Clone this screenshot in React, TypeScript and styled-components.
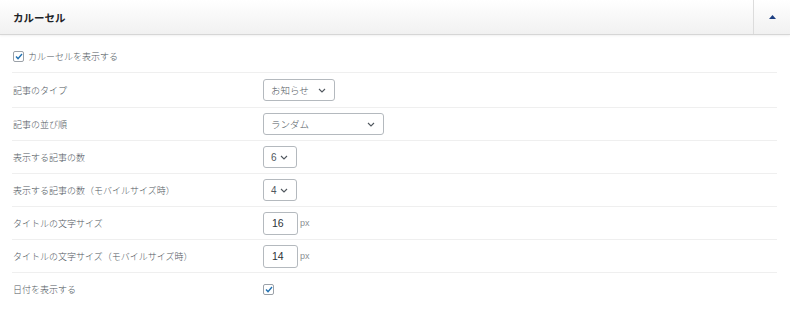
import * as React from "react";
import styled, { createGlobalStyle } from "styled-components";

const GlobalStyle = createGlobalStyle`
  body {
    margin: 0;
    background: #fff;
    font-family: "Liberation Sans", "Noto Sans CJK JP", sans-serif;
    color: #3c434a;
  }
`;

type Field =
  | { kind: "select"; label: string; value: string; width: number }
  | { kind: "number"; label: string; value: string }
  | { kind: "check"; label: string };

const fields: Field[] = [
  { kind: "select", label: "記事のタイプ", value: "お知らせ", width: 72 },
  { kind: "select", label: "記事の並び順", value: "ランダム", width: 121 },
  { kind: "select", label: "表示する記事の数", value: "6", width: 34 },
  { kind: "select", label: "表示する記事の数（モバイルサイズ時）", value: "4", width: 34 },
  { kind: "number", label: "タイトルの文字サイズ", value: "16" },
  { kind: "number", label: "タイトルの文字サイズ（モバイルサイズ時）", value: "14" },
  { kind: "check", label: "日付を表示する" },
];

const Chevron = () => (
  <svg width="8" height="5" viewBox="0 0 8 5">
    <path d="M1 1 L4 4 L7 1" fill="none" stroke="#50575e" strokeWidth="1.1" />
  </svg>
);

const Check = () => (
  <CheckBox>
    <svg width="8" height="7" viewBox="0 0 8 7">
      <path d="M1 3.6 L3 5.6 L7 1" fill="none" stroke="#2271b1" strokeWidth="1.4" />
    </svg>
  </CheckBox>
);

export default function App() {
  return (
    <>
      <GlobalStyle />
      <Panel>
        <Header>
          <Title>カルーセル</Title>
          <Toggle>
            <svg width="7" height="4" viewBox="0 0 7 4">
              <path d="M0 4 L3.5 0 L7 4 Z" fill="#1d3f82" />
            </svg>
          </Toggle>
        </Header>
        <Body>
          <TopOption>
            <Check />
            <OptionText>カルーセルを表示する</OptionText>
          </TopOption>
          {fields.map((f, i) => (
            <Row key={i} $first={i === 0}>
              <Label>{f.label}</Label>
              <Control>
                {f.kind === "select" && (
                  <Select style={{ width: f.width }} $latin={f.value.length === 1}>
                    <span>{f.value}</span>
                    <Chevron />
                  </Select>
                )}
                {f.kind === "number" && (
                  <>
                    <NumberBox>{f.value}</NumberBox>
                    <Unit>px</Unit>
                  </>
                )}
                {f.kind === "check" && <Check />}
              </Control>
            </Row>
          ))}
        </Body>
      </Panel>
    </>
  );
}

const Panel = styled.div`
  width: 790px;
  height: 312px;
  background: #fff;
`;

const Header = styled.div`
  height: 35px;
  display: flex;
  align-items: stretch;
  background: linear-gradient(#ffffff, #f1f1f1);
  border-bottom: 1px solid #d6d6d6;
  box-shadow: 0 1px 2px rgba(0, 0, 0, 0.06);
  box-sizing: border-box;
`;

const Title = styled.h2`
  flex: 1;
  margin: 0;
  padding-left: 13px;
  padding-top: 1px;
  display: flex;
  align-items: center;
  font-family: "Noto Sans CJK JP", sans-serif;
  font-size: 10.5px;
  font-weight: 700;
  color: #1d2327;
`;

const Toggle = styled.div`
  width: 35px;
  border-left: 1px solid #dcdcdc;
  display: flex;
  align-items: center;
  justify-content: center;
  padding-left: 1px;
`;

const Body = styled.div`
  padding: 0 13px 0 12px;
`;

const TopOption = styled.div`
  height: 37px;
  padding: 6px 0 0 1px;
  display: flex;
  align-items: center;
  gap: 4px;
  box-sizing: border-box;
`;

const OptionText = styled.span`
  font-family: "Noto Sans CJK JP", sans-serif;
  font-size: 9px;
  font-weight: 300;
  color: #50575e;
`;

const Row = styled.div<{ $first: boolean }>`
  height: ${(p) => (p.$first ? 35 : 33)}px;
  display: grid;
  grid-template-columns: 251px 1fr;
  align-items: center;
  border-top: 1px solid #efefef;
  box-sizing: border-box;
`;

const Label = styled.span`
  padding-left: 1px;
  font-family: "Noto Sans CJK JP", sans-serif;
  font-size: 9px;
  font-weight: 300;
  color: #50575e;
`;

const Control = styled.div`
  display: flex;
  align-items: center;
`;

const Select = styled.div<{ $latin: boolean }>`
  height: 22px;
  box-sizing: border-box;
  border: 1px solid #b4b9be;
  border-radius: 3px;
  display: flex;
  align-items: center;
  justify-content: space-between;
  padding: 0 8px 0 7px;
  font-family: "Liberation Sans", "Noto Sans CJK JP", sans-serif;
  font-size: ${(p) => (p.$latin ? 10 : 9.5)}px;
  font-weight: 300;
  color: #50575e;
`;

const NumberBox = styled.div`
  width: 35px;
  height: 23px;
  box-sizing: border-box;
  border: 1px solid #b4b9be;
  border-radius: 3px;
  display: flex;
  align-items: center;
  padding-left: 8px;
  font-family: "Liberation Sans", sans-serif;
  font-size: 10.5px;
  color: #2c3338;
`;

const Unit = styled.span`
  margin-left: 2px;
  font-family: "Liberation Sans", sans-serif;
  font-size: 9px;
  color: #8a8f94;
`;

const CheckBox = styled.span`
  width: 11px;
  height: 11px;
  box-sizing: border-box;
  border: 1px solid #9ba1a8;
  border-radius: 2px;
  background: #fff;
  display: inline-flex;
  align-items: center;
  justify-content: center;
`;
